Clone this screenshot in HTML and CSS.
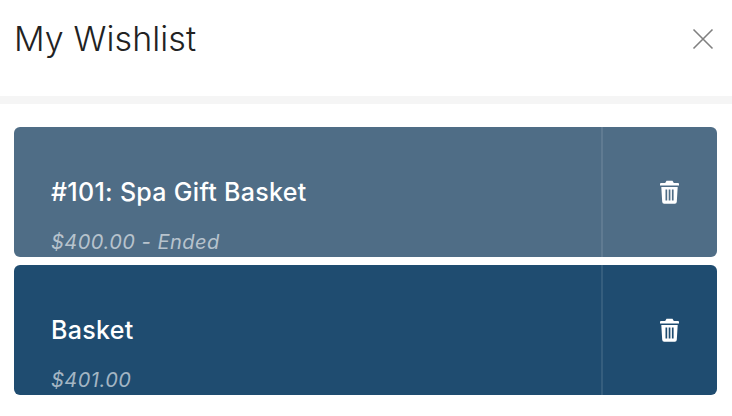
FILE: index.html
```html
<!DOCTYPE html>
<html lang="en">
<head>
<meta charset="utf-8">
<title>My Wishlist</title>
<link rel="stylesheet" href="styles.css">
</head>
<body>
<header class="header">
  <h1 class="title">My Wishlist</h1>
  <button class="close" aria-label="Close">
    <svg width="22" height="22" viewBox="0 0 22 22"><path d="M1.500 1.500 20.500 20.500M20.500 1.500 1.500 20.500" fill="none" stroke="#808080" stroke-width="1.600"/></svg>
  </button>
</header>
<main class="list">
  <article class="item item-ended">
    <div class="info">
      <div class="name">#101: Spa Gift Basket</div>
      <div class="meta">$400.00 - Ended</div>
    </div>
    <div class="action">
      <svg class="trash" width="19" height="24" viewBox="0 0 19 24"><path fill="#fff" fill-rule="evenodd" d="M6.500 0.800h6L13.800 3H18a1 1 0 0 1 1 1v1.600H0V4a1 1 0 0 1 1-1h4.200zM1.300 7h16.400l-.9 14.800a2 2 0 0 1-2 1.900H4.200a2 2 0 0 1-2-1.900zM5.500 9.500v11h1.700v-11zM8.700 9.500v11h1.700v-11zM11.900 9.500v11h1.700v-11z"/></svg>
    </div>
  </article>
  <article class="item">
    <div class="info">
      <div class="name">Basket</div>
      <div class="meta">$401.00</div>
    </div>
    <div class="action">
      <svg class="trash" width="19" height="24" viewBox="0 0 19 24"><path fill="#fff" fill-rule="evenodd" d="M6.500 0.800h6L13.800 3H18a1 1 0 0 1 1 1v1.600H0V4a1 1 0 0 1 1-1h4.200zM1.300 7h16.400l-.9 14.800a2 2 0 0 1-2 1.900H4.200a2 2 0 0 1-2-1.900zM5.500 9.500v11h1.700v-11zM8.700 9.500v11h1.700v-11zM11.900 9.500v11h1.700v-11z"/></svg>
    </div>
  </article>
</main>
</body>
</html>
```
FILE: styles.css
```css
* { box-sizing: border-box; }
html, body { margin: 0; padding: 0; }
body {
  width: 732px;
  height: 416px;
  overflow: hidden;
  background: #fff;
  font-family: Inter, "Liberation Sans", sans-serif;
}
.header {
  height: 104px;
  border-bottom: 8px solid #f5f5f5;
  padding: 0 18px 18px 14px;
  display: flex;
  align-items: center;
  justify-content: space-between;
}
.title {
  margin: 0;
  font-size: 34px;
  font-weight: 300;
  color: #222;
  line-height: 1;
  letter-spacing: 0.1px;
}
.close {
  width: 22px;
  height: 22px;
  padding: 0;
  border: 0;
  background: none;
  display: flex;
}
.list {
  padding: 23px 15px 0 14px;
  display: flex;
  flex-direction: column;
  gap: 8px;
}
.item {
  height: 130px;
  border-radius: 6px;
  background: #1f4c70;
  display: flex;
  overflow: hidden;
  color: #fff;
}
.item-ended { background: #4f6d86; }
.info {
  flex: 1;
  padding: 50px 0 0 37px;
  border-right: 2px solid rgba(255, 255, 255, 0.1);
}
.name {
  font-size: 25px;
  font-weight: 500;
  line-height: 30px;
  letter-spacing: 0.3px;
}
.meta {
  margin-top: 23px;
  font-size: 20px;
  font-style: italic;
  line-height: 24px;
  letter-spacing: 0.5px;
  color: rgba(255, 255, 255, 0.6);
}
.action {
  width: 114px;
  display: flex;
  justify-content: center;
  padding: 53px 0 0 18px;
}
.trash { display: block; }
```
